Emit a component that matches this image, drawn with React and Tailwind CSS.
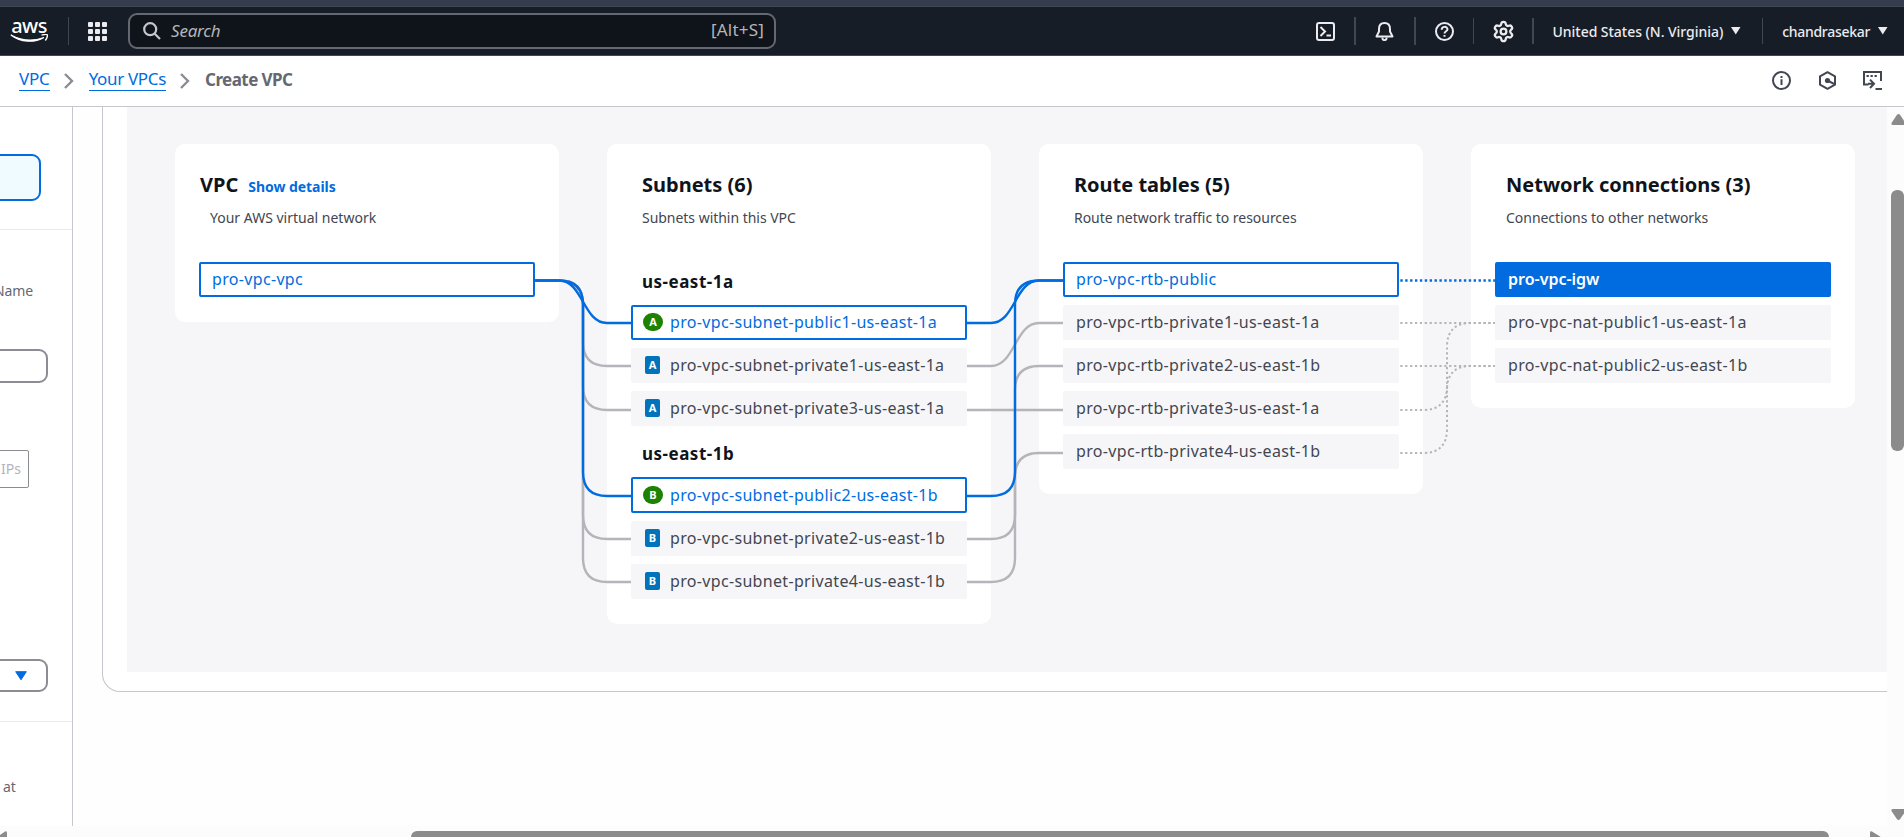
import { Settings } from "lucide-react";

const vpcs = [{ name: "pro-vpc-vpc", state: "linked" }];

const zones = [
  {
    name: "us-east-1a",
    nodes: [
      { name: "pro-vpc-subnet-public1-us-east-1a", state: "linked", badge: "A", open: true },
      { name: "pro-vpc-subnet-private1-us-east-1a", badge: "A" },
      { name: "pro-vpc-subnet-private3-us-east-1a", badge: "A" },
    ],
  },
  {
    name: "us-east-1b",
    nodes: [
      { name: "pro-vpc-subnet-public2-us-east-1b", state: "linked", badge: "B", open: true, tall: true },
      { name: "pro-vpc-subnet-private2-us-east-1b", badge: "B" },
      { name: "pro-vpc-subnet-private4-us-east-1b", badge: "B" },
    ],
  },
];

const routes = [
  { name: "pro-vpc-rtb-public", state: "linked" },
  { name: "pro-vpc-rtb-private1-us-east-1a" },
  { name: "pro-vpc-rtb-private2-us-east-1b" },
  { name: "pro-vpc-rtb-private3-us-east-1a" },
  { name: "pro-vpc-rtb-private4-us-east-1b" },
];

const connections = [
  { name: "pro-vpc-igw", state: "selected" },
  { name: "pro-vpc-nat-public1-us-east-1a" },
  { name: "pro-vpc-nat-public2-us-east-1b" },
];

const nodeStyles = {
  plain: "bg-[#f6f6f9] border-[#f6f6f9] text-[#424650] tracking-[0.33px]",
  linked: "bg-white border-[#006ce0] text-[#006ce0] tracking-[0.33px]",
  selected: "bg-[#006ce0] border-[#006ce0] text-white font-semibold",
};

function Badge({ letter, open }) {
  return open ? (
    <span className="mr-[7px] -ml-px flex h-[18px] w-5 items-center justify-center rounded-[9px] bg-[#1d8102] text-[11px] font-bold tracking-normal text-white">
      {letter}
    </span>
  ) : (
    <span className="mr-2.5 ml-px flex h-[18px] w-[15px] items-center justify-center rounded-xs bg-[#0073bb] text-[11px] font-bold tracking-normal text-white">
      {letter}
    </span>
  );
}

function Node({ name, state = "plain", badge, open, tall }) {
  return (
    <div
      className={`flex items-center rounded-xs border-2 pb-px pl-[11px] text-[16px] leading-5 ${tall ? "h-9" : "h-[35px]"} ${nodeStyles[state]}`}
    >
      {badge && <Badge letter={badge} open={open} />}
      <span>{name}</span>
    </div>
  );
}

function Column({ title, link, subtitle, children }) {
  return (
    <section className="w-96 shrink-0 rounded-[10px] bg-white px-6 pt-[27px] pb-[25px]">
      <header className={`mb-[34px] ${link ? "pl-px" : "pl-[11px]"}`}>
        <h2 className="flex h-7 items-baseline text-[20px] leading-7 font-bold text-[#0f141a]">
          {title}
          {link && <a className="ml-[10px] text-[14px] tracking-[-0.05px] text-[#006ce0]">{link}</a>}
        </h2>
        <p className={`mt-[9px] text-[14px] leading-5 text-[#424650] ${link ? "pl-[10px]" : "tracking-[-0.03px]"}`}>
          {subtitle}
        </p>
      </header>
      {children}
    </section>
  );
}

const NodeList = ({ nodes }) => (
  <div className="flex flex-col gap-2">
    {nodes.map((n) => (
      <Node key={n.name} {...n} />
    ))}
  </div>
);

// Path between two node edges, relative to the column gap they span.
function link(x, y1, y2) {
  const m = x + 48;
  if (y1 === y2) return `M${x} ${y1}H${x + 96}`;
  if (Math.abs(y2 - y1) < 48)
    return `M${x} ${y1}H${m - 24}C${m} ${y1} ${m} ${y2} ${m + 24} ${y2}H${x + 96}`;
  const d = y2 > y1 ? 24 : -24;
  return `M${x} ${y1}H${m - 24}Q${m} ${y1} ${m} ${y1 + d}V${y2 - d}Q${m} ${y2} ${m + 24} ${y2}H${x + 96}`;
}

const greyLinks = [
  ...[259, 303, 432, 475].map((y) => [408, 173.5, y]),
  [840, 259, 216],
  [840, 303, 303],
  [840, 432, 259],
  [840, 475, 346],
];
const blueLinks = [
  [408, 173.5, 216],
  [408, 173.5, 389],
  [840, 216, 173.5],
  [840, 389, 173.5],
];
const dottedLinks = [
  [1272, 216, 216],
  [1272, 259, 259],
  [1272, 303, 216],
  [1272, 346, 259],
];

function Links() {
  return (
    <svg className="pointer-events-none absolute inset-0 h-full w-full" fill="none" strokeWidth="2.4">
      <g stroke="#b4b4bb">
        {greyLinks.map((l) => (
          <path key={l.join()} d={link(...l)} />
        ))}
      </g>
      <g stroke="#b4b4bb" strokeWidth="2" strokeDasharray="2.2 2.690" strokeDashoffset="-1.3">
        {dottedLinks.map((l) => (
          <path key={l.join()} d={link(...l)} />
        ))}
      </g>
      <g stroke="#006ce0">
        {blueLinks.map((l) => (
          <path key={l.join()} d={link(...l)} />
        ))}
        <path d={link(1272, 173.5, 173.5)} strokeDasharray="2.4 2.490" strokeDashoffset="-1.3" />
      </g>
    </svg>
  );
}

function AwsLogo() {
  return (
    <div className="flex w-[38px] flex-col items-center">
      <span className="h-[15px] text-[20px] leading-[14px] font-medium tracking-[-0.6px] text-white">aws</span>
      <svg width="38" height="9" viewBox="0 0 38 9" fill="none" stroke="#fff">
        <path d="M.8 1C11 8.600 24 9 34 3.400C24 7.200 12 7 .8 1Z" strokeWidth="1.100" fill="#fff" />
        <path d="M31.500 1.200C34 .5 37 .2 37.300 1C37.600 2.200 36.500 5 35.300 6.500" strokeWidth="1.400" />
      </svg>
    </div>
  );
}

const Icon = ({ children, className = "" }) => (
  <svg width="19" height="19" viewBox="0 0 19 19" fill="none" stroke="currentColor" strokeWidth="2" className={className}>
    {children}
  </svg>
);

const Caret = () => (
  <svg width="10" height="8" viewBox="0 0 10 8" className="ml-2 fill-[#ebebf0]">
    <path d="M0 0H9.500L4.750 7.500Z" />
  </svg>
);

const Chevron = () => (
  <svg width="10" height="16" viewBox="0 0 10 16" fill="none" stroke="#8c8c94" strokeWidth="2.400">
    <path d="M1 1L8 8L1 15" />
  </svg>
);

function TopBar() {
  return (
    <header className="flex h-[50px] items-center border-t border-b border-t-[#414750] border-b-[#424650] bg-[#161d26] pl-2.5 text-[#ebebf0]">
      <AwsLogo />
      <div className="ml-5 h-7 w-px bg-[#424650]" />
      <div className="ml-[19px] grid grid-cols-3 gap-0.5">
        {[0, 1, 2, 3, 4, 5, 6, 7, 8].map((i) => (
          <i key={i} className="size-[5px] rounded-[1px] bg-[#ebebf0]" />
        ))}
      </div>
      <div className="ml-[21px] flex h-9 w-[648px] items-center rounded-[9px] border-2 border-[#656871] bg-[#0f141a] pr-[10px] pl-[13px] text-[17px] text-[#b4b4bb]">
        <svg width="18" height="18" viewBox="0 0 18 18" fill="none" stroke="#c6c6cd" strokeWidth="2.200">
          <circle cx="7.200" cy="7.200" r="6" />
          <path d="M11.500 11.500L17 17" />
        </svg>
        <span className="ml-[10px] tracking-[-0.2px] italic">Search</span>
        <span className="ml-auto pb-0.5 tracking-[0.2px]">[Alt+S]</span>
      </div>
      <div className="ml-auto flex items-center text-[14px] font-medium">
        <Icon>
          <rect x="1" y="1" width="17" height="17" rx="2" />
          <path d="M4.500 5L9 9.500L4.500 14M10.500 13.500H15" />
        </Icon>
        <div className="ml-[19px] h-7 w-0.5 bg-[#424650]" />
        <Icon className="ml-[19px]">
          <path d="M9.500 1C6 1 4 3.500 4 7V9.500L1.500 14.500H17.500L15 9.500V7C15 3.500 13 1 9.500 1Z" strokeLinejoin="round" />
          <path d="M7.300 15.500C7.300 19 11.700 19 11.700 15.500" />
        </Icon>
        <div className="ml-5 h-7 w-0.5 bg-[#424650]" />
        <Icon className="ml-[19px]">
          <circle cx="9.500" cy="9.500" r="8.500" />
          <path d="M6.700 7.700C6.700 4 12.500 4 12.500 7.300C12.500 9.300 9.500 9.200 9.500 11.400M9.500 12.900V14.800" />
        </Icon>
        <div className="ml-[19px] h-[26px] w-px bg-[#424650]" />
        <Settings size={23} strokeWidth={2.4} className="ml-[18px]" />
        <div className="ml-[17px] h-[26px] w-0.5 bg-[#424650]" />
        <span className="ml-[19px] tracking-[-0.04px]">United States (N. Virginia)</span>
        <Caret />
        <div className="ml-[21px] h-[26px] w-px bg-[#424650]" />
        <span className="ml-[19px] tracking-[-0.3px]">chandrasekar</span>
        <Caret />
        <div className="w-4" />
      </div>
    </header>
  );
}

function Breadcrumbs() {
  return (
    <nav className="flex h-[51px] items-center border-b border-[#c6c6cd] bg-white pr-[22px] pb-px pl-[19px] text-[17px] leading-5 text-[#006ce0]">
      <a className="h-[21px] border-b border-[#006ce0] leading-[18px] tracking-[-0.2px]">VPC</a>
      <span className="mr-[15px] ml-3.5">
        <Chevron />
      </span>
      <a className="h-[21px] border-b border-[#006ce0] leading-[18px] tracking-[-0.33px]">Your VPCs</a>
      <span className="mr-[15px] ml-3.5">
        <Chevron />
      </span>
      <span className="pb-px font-bold tracking-[-0.56px] text-[#656871]">Create VPC</span>
      <div className="ml-auto flex items-center text-[#424650]">
        <Icon>
          <circle cx="9.500" cy="9.500" r="8.500" />
          <path d="M9.500 8.300V14M9.500 5V7" />
        </Icon>
        <Icon className="ml-[27px]">
          <path d="M9.500 1.200L17 5.300V13.700L9.500 17.800L2 13.700V5.300Z" strokeLinejoin="round" />
          <circle cx="9.500" cy="9.500" r="2.600" fill="currentColor" stroke="none" />
          <path d="M9.500 9.500L16.500 13.200" />
        </Icon>
        <Icon className="ml-[26px]">
          <path d="M5.500 13.500H1V1H18V10M3.500 5H5.800M7.500 5H9.800M11.500 5H13.800" />
          <path d="M5 12.800H10.500M7 8.600L11 12.800L7 17M12.500 18H19" />
        </Icon>
      </div>
    </nav>
  );
}

function FormPane() {
  return (
    <aside className="h-full w-[73px] shrink-0 overflow-hidden border-r border-[#c6c6cd] bg-white text-[14px] leading-5 text-[#656871]">
      <div className="h-[123px] border-b border-[#ebebf0] pt-[47px]">
        <div className="-ml-4 h-[47px] w-[57px] rounded-[9px] border-2 border-[#006ce0] bg-[#f0fbff]" />
      </div>
      <div className="box-content flex h-5 w-[33px] justify-end pt-[51px]">
        <span className="tracking-[-0.1px]">Name</span>
      </div>
      <div className="mt-12 -ml-4 h-[34px] w-16 rounded-[9px] border-2 border-[#8c8c94]" />
      <div className="mt-[67px] -ml-4 flex h-[38px] w-[45px] items-center justify-end rounded-xs border border-[#8c8c94] pr-[7px] pb-px text-[#b4b4bb]">
        IPs
      </div>
      <div className="mt-[171px] -ml-4 flex h-[33px] w-16 items-center justify-end rounded-[9px] border-2 border-[#8c8c94] pr-[19px]">
        <svg width="12" height="10" viewBox="0 0 12 10" className="fill-[#006ce0] stroke-[#006ce0]" strokeLinejoin="round">
          <path d="M.7.7H11.300L6 8.800Z" />
        </svg>
      </div>
      <div className="mt-[29px] border-t border-[#ebebf0] pt-[55px] pl-[3px]">at</div>
    </aside>
  );
}

export default function App() {
  return (
    <div className="flex h-[837px] w-[1904px] flex-col overflow-hidden bg-white font-['Noto_Sans',sans-serif]">
      <div className="h-[6px] shrink-0 bg-[#343c4e]" />
      <div className="shrink-0">
        <TopBar />
        <Breadcrumbs />
      </div>
      <div className="flex h-[719px] shrink-0">
        <FormPane />
        <main className="flex-1 overflow-hidden bg-[#fefefe] pl-[29px]">
          <div className="h-[585px] w-[1900px] rounded-bl-[18px] border-b border-l border-[#c6c6cd] bg-white pl-6">
            <div className="relative flex h-[565px] w-[1776px] items-start gap-12 bg-[#f6f6f9] pt-[37px] pl-12">
              <Column title="VPC" link="Show details" subtitle="Your AWS virtual network">
                <NodeList nodes={vpcs} />
              </Column>
              <Column title="Subnets (6)" subtitle="Subnets within this VPC">
                {zones.map((z, i) => (
                  <div key={z.name} className={i ? "mt-2" : ""}>
                    <h3 className="h-[43px] pt-[10px] pl-[11px] text-[17px] leading-5 font-bold tracking-[0.5px] text-[#0f141a]">
                      {z.name}
                    </h3>
                    <NodeList nodes={z.nodes} />
                  </div>
                ))}
              </Column>
              <Column title="Route tables (5)" subtitle="Route network traffic to resources">
                <NodeList nodes={routes} />
              </Column>
              <Column title="Network connections (3)" subtitle="Connections to other networks">
                <NodeList nodes={connections} />
              </Column>
              <Links />
            </div>
          </div>
        </main>
        <div className="flex w-[17px] shrink-0 flex-col overflow-hidden bg-[#fcfcfc] pt-[7px] pl-1">
          <svg width="15" height="11" viewBox="0 0 15 11" className="max-w-none shrink-0 fill-[#8b8b8b]">
            <path d="M6 .8Q7.500-.6 9 .8L14.500 9Q15 11 13 11H2Q0 11 .5 9Z" />
          </svg>
          <div className="mt-[65px] h-[261px] w-[13px] shrink-0 rounded-[6px] bg-[#8b8b8b]" />
          <svg width="15" height="11" viewBox="0 0 15 11" className="mt-[358px] max-w-none shrink-0 fill-[#8b8b8b]">
            <path d="M6 10.200Q7.500 11.600 9 10.200L14.500 2Q15 0 13 0H2Q0 0 .5 2Z" />
          </svg>
        </div>
      </div>
      <div className="flex h-[11px] shrink-0 overflow-hidden bg-[#fcfcfc] pt-[5px]">
        <svg width="7" height="13" viewBox="0 0 7 13" className="shrink-0 fill-[#8b8b8b]">
          <path d="M-4 7L5 .5Q7-.5 7 2V13H-4Z" />
        </svg>
        <div className="ml-[404px] h-3 w-[1418px] shrink-0 rounded-[6px] bg-[#8b8b8b]" />
        <svg width="11" height="13" viewBox="0 0 11 13" className="ml-[41px] shrink-0 fill-[#8b8b8b]">
          <path d="M0 1.500Q0-.5 2 .5L10 5.500Q11.500 6.500 10 7.500L2 12.500Q0 13.500 0 11.500Z" />
        </svg>
      </div>
    </div>
  );
}
